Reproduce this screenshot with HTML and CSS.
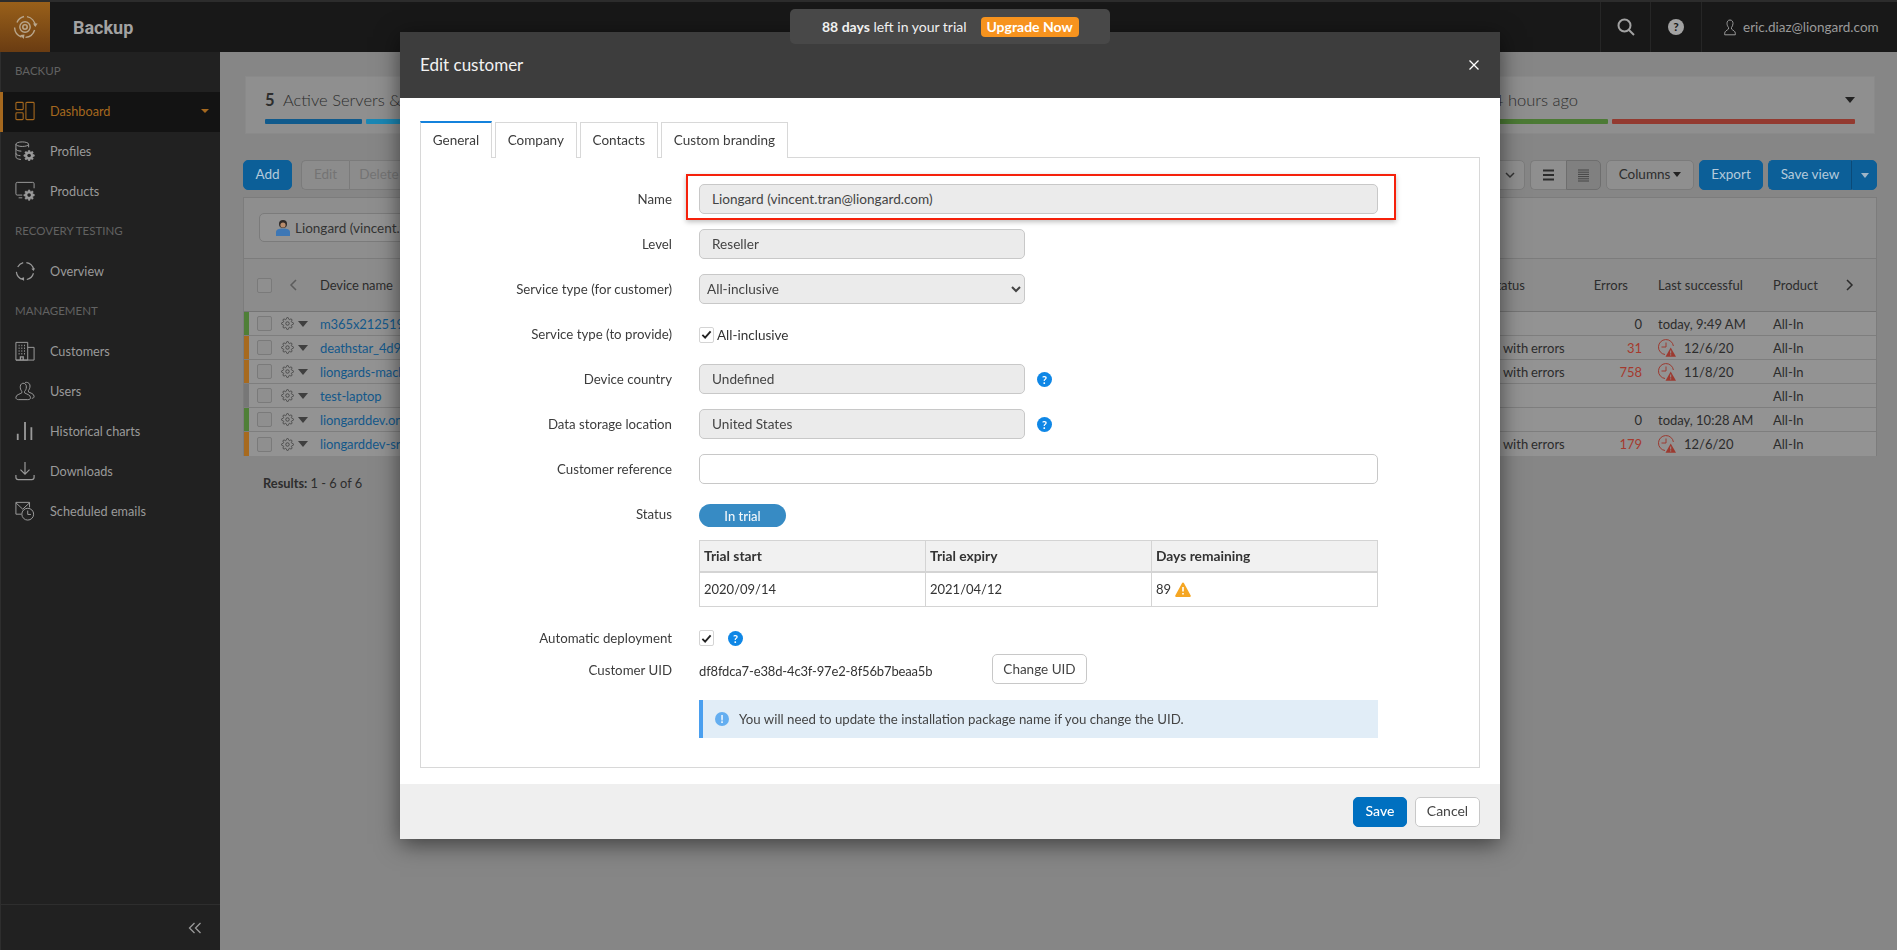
FILE: index.html
```html
<!DOCTYPE html>
<html lang="en">
<head>
<meta charset="utf-8">
<title>Backup - Edit customer</title>
<link rel="stylesheet" href="styles.css">
</head>
<body>
<svg class="defs" width="0" height="0" aria-hidden="true">
  <symbol id="gear" viewBox="0 0 24 24"><circle cx="12" cy="12" r="3.2"/><path d="M19.4 15a1.65 1.65 0 0 0 .33 1.82l.06.06a2 2 0 0 1 0 2.83 2 2 0 0 1-2.83 0l-.06-.06a1.65 1.65 0 0 0-1.82-.33 1.65 1.65 0 0 0-1 1.51V21a2 2 0 0 1-2 2 2 2 0 0 1-2-2v-.09A1.65 1.65 0 0 0 9 19.4a1.65 1.65 0 0 0-1.82.33l-.06.06a2 2 0 0 1-2.83 0 2 2 0 0 1 0-2.83l.06-.06a1.65 1.65 0 0 0 .33-1.82 1.65 1.65 0 0 0-1.51-1H3a2 2 0 0 1-2-2 2 2 0 0 1 2-2h.09A1.65 1.65 0 0 0 4.6 9a1.65 1.65 0 0 0-.33-1.82l-.06-.06a2 2 0 0 1 0-2.83 2 2 0 0 1 2.83 0l.06.06a1.65 1.65 0 0 0 1.82.33H9a1.65 1.65 0 0 0 1-1.51V3a2 2 0 0 1 2-2 2 2 0 0 1 2 2v.09a1.65 1.65 0 0 0 1 1.51 1.65 1.65 0 0 0 1.82-.33l.06-.06a2 2 0 0 1 2.83 0 2 2 0 0 1 0 2.83l-.06.06a1.65 1.65 0 0 0-.33 1.82V9a1.65 1.65 0 0 0 1.51 1H21a2 2 0 0 1 2 2 2 2 0 0 1-2 2h-.09a1.65 1.65 0 0 0-1.51 1z"/></symbol>
  <symbol id="late" viewBox="0 0 18 18"><path d="M15.400 7A7.500 7.500 0 1 0 7 15.500" fill="none" stroke="currentColor" stroke-width="1"/><path d="M8 3.500V8H3.500" fill="none" stroke="currentColor" stroke-width="1"/><path d="M12.700 8.500L18 17.800H7.500z" fill="currentColor"/><path d="M12.700 11.500v3M12.700 15.300v1.200" stroke="#939393" stroke-width="1"/></symbol>
  <symbol id="tick" viewBox="0 0 12 12"><path d="M1.500 6.500L4.500 9.500L10.500 2.500" fill="none" stroke="currentColor" stroke-width="2"/></symbol>
</svg>

<header class="topbar">
  <div class="logo">
    <svg width="26" height="26" viewBox="0 0 26 26" fill="none" stroke="#b9a68c" stroke-width="1.4"><circle cx="13" cy="13" r="5.2"/><circle cx="13" cy="13" r="2.2" stroke-width="1.6"/><path d="M5 8.5A10 10 0 0 1 12 2.5"/><path d="M15 2.6A10.5 10.5 0 0 1 23.3 12"/><path d="M22.6 16A10.5 10.5 0 0 1 13.5 23.4"/><path d="M9.5 23A10.5 10.5 0 0 1 2.6 13.5"/><path d="M21 9.5L23.4 13L25.6 9.5z" fill="#b9a68c" stroke="none"/><path d="M8 21L12.5 20.5L11.8 25z" fill="#b9a68c" stroke="none"/></svg>
  </div>
  <div class="app-name">Backup</div>
  <div class="top-cell top-cell-search">
    <svg width="18" height="18" viewBox="0 0 18 18" fill="none" stroke="#a2a2a2" stroke-width="2"><circle cx="7.5" cy="7.5" r="6"/><path d="M12 12l5 5"/></svg>
  </div>
  <div class="top-cell">
    <span class="top-help">?</span>
  </div>
  <div class="top-cell top-cell-user">
    <svg width="12" height="17" viewBox="0 0 12 17" fill="none" stroke="#9a9a9a" stroke-width="1"><path d="M6 1C3.8 1 3 2.800 3 4.500C3 6.300 3.800 7.500 4.500 8.500V10C3 11.500 .7 12 .7 14.200V15.800H11.300V14.200C11.300 12 9 11.500 7.500 10V8.500C8.200 7.500 9 6.300 9 4.500C9 2.800 8.200 1 6 1Z"/></svg>
    <span class="top-email">eric.diaz@liongard.com</span>
  </div>
</header>

<div class="shell">
  <nav class="sidebar">
    <div class="nav-section">Backup</div>
    <a class="nav-item nav-active">
      <svg class="nav-icon" viewBox="0 0 22 22" fill="none" stroke="#a5681e" stroke-width="1.2"><rect x="1" y="1.500" width="8" height="8" rx="1"/><rect x="1" y="13" width="8" height="7.500" rx="1"/><rect x="12" y="1.500" width="9" height="19" rx="1"/></svg>
      <span>Dashboard</span><i class="nav-caret"></i>
    </a>
    <a class="nav-item">
      <svg class="nav-icon" viewBox="0 0 22 22" fill="none" stroke="#9a9a9a" stroke-width="1.1"><ellipse cx="8" cy="3.500" rx="7" ry="2.500"/><path d="M15 4v3M1 3.500V17.500C1 19 3 20 6.500 20.300M1 8.500C1 10 3 11 7 11.200M1 13.500C1 15 3 16 6 16.200"/><use href="#gear" x="9" y="9.500" width="13" height="13" fill="#9a9a9a" stroke="#9a9a9a"/><circle cx="15.500" cy="16" r="2" fill="#212121" stroke="none"/></svg>
      <span>Profiles</span>
    </a>
    <a class="nav-item">
      <svg class="nav-icon" viewBox="0 0 22 22" fill="none" stroke="#9a9a9a" stroke-width="1.1"><path d="M8 15.500H2.500C1.500 15.500 1 15 1 14V3C1 2 1.500 1.500 2.500 1.500H19.500C20.500 1.500 21 2 21 3V8"/><path d="M4 18.500H8"/><use href="#gear" x="9" y="9" width="13" height="13" fill="#9a9a9a" stroke="#9a9a9a"/><circle cx="15.500" cy="15.500" r="2" fill="#212121" stroke="none"/></svg>
      <span>Products</span>
    </a>
    <div class="nav-section">Recovery testing</div>
    <a class="nav-item">
      <svg class="nav-icon" viewBox="0 0 22 22" fill="none" stroke="#9a9a9a" stroke-width="1.300"><path d="M3 6.500A9.500 9.500 0 0 1 9 1.800"/><path d="M12.500 1.700A9.500 9.500 0 0 1 20.500 9.500"/><path d="M20.300 13.500A9.500 9.500 0 0 1 13 20.300"/><path d="M9 20.400A9.500 9.500 0 0 1 1.500 12"/><path d="M18 8.500L20.500 11L22 8z" fill="#9a9a9a" stroke="none"/><path d="M6.500 19L10 18V22z" fill="#9a9a9a" stroke="none"/></svg>
      <span>Overview</span>
    </a>
    <div class="nav-section">Management</div>
    <a class="nav-item">
      <svg class="nav-icon" viewBox="0 0 22 22" fill="none" stroke="#9a9a9a" stroke-width="1.100"><path d="M1 21V1.500H14V21zM14 7H21V21H1"/><path d="M4 5h1M7 5h1M10 5h1M4 8h1M7 8h1M10 8h1M4 11h1M7 11h1M10 11h1M4 14h1M7 14h1M10 14h1M6 21v-3.500h3V21" stroke-width="1.500"/></svg>
      <span>Customers</span>
    </a>
    <a class="nav-item">
      <svg class="nav-icon" viewBox="0 0 22 22" fill="none" stroke="#9a9a9a" stroke-width="1.100"><path d="M8.500 2.500C6.500 3 5.500 5 5.800 7.500C6 9.500 7 10.500 7.500 11.500V13C5.500 14.500 1 15 1 18C1 20 2.500 20.500 4 20.500H14C16 20.500 17 20 17 18C17 15 12.500 14.500 10.500 13V11.500C11.500 10.500 12.500 9 12.500 6.500C12.500 4 11 2 8.500 2.500Z"/><path d="M11 1.800C13 .8 16.500 2 16.500 5.500C16.500 8 15.500 9.500 14.800 10.300V12C16.500 13 21 14 21 16.800C21 18.500 20 19 18.500 19"/></svg>
      <span>Users</span>
    </a>
    <a class="nav-item">
      <svg class="nav-icon" viewBox="0 0 22 22" fill="none" stroke="#9a9a9a" stroke-width="2"><path d="M3 21V14M11 21V1M18 21V7"/></svg>
      <span>Historical charts</span>
    </a>
    <a class="nav-item">
      <svg class="nav-icon" viewBox="0 0 22 22" fill="none" stroke="#9a9a9a" stroke-width="1.300"><path d="M11 1V14M6 9.500L11 14.500L16 9.500"/><path d="M1 15.500V18C1 19.500 2 20.500 3.500 20.500H18.500C20 20.500 21 19.500 21 18V15.500"/></svg>
      <span>Downloads</span>
    </a>
    <a class="nav-item">
      <svg class="nav-icon" viewBox="0 0 22 22" fill="none" stroke="#9a9a9a" stroke-width="1.100"><path d="M7 14.500H1V1.500H16V7M1 2L8.500 9L16 2"/><circle cx="14" cy="14.500" r="6.500"/><path d="M14 10.500V14.800H17.500"/></svg>
      <span>Scheduled emails</span>
    </a>
    <div class="side-foot">
      <svg width="14" height="12" viewBox="0 0 14 12" fill="none" stroke="#9a9a9a" stroke-width="1.300"><path d="M6.500 1L1.500 6L6.500 11M12.500 1L7.500 6L12.500 11"/></svg>
    </div>
  </nav>

  <main class="main">
    <section class="summary">
      <div class="summary-head">
        <span><b>5</b>&nbsp; Active Servers &amp; Workstations</span>
        <span class="summary-right">Last backup 4 hours ago</span>
        <i class="caret caret-dark"></i>
      </div>
      <div class="summary-bars">
        <i class="bar bar-blue"></i><i class="bar bar-cyan"></i><i class="bar bar-green"></i><i class="bar bar-red"></i>
      </div>
    </section>

    <div class="toolbar">
      <button class="btn btn-blue btn-add">Add</button>
      <div class="btn-group">
        <button class="btn btn-off">Edit</button><button class="btn btn-off">Delete</button>
      </div>
      <div class="toolbar-right">
        <button class="btn btn-grey btn-chevron"><svg width="10" height="7" viewBox="0 0 10 7" fill="none" stroke="#333" stroke-width="1.500"><path d="M1 1l4 4 4-4"/></svg></button>
        <div class="btn-group">
          <button class="btn btn-grey btn-density"><svg width="11" height="12" viewBox="0 0 11 12" stroke="#2c2c2c" stroke-width="2"><path d="M0 1.500h11M0 6h11M0 10.500h11"/></svg></button><button class="btn btn-pressed btn-density"><svg width="11" height="13" viewBox="0 0 11 13" stroke="#444" stroke-width="1"><path d="M0 1h11M0 3.200h11M0 5.400h11M0 7.600h11M0 9.800h11M0 12h11"/></svg></button>
        </div>
        <button class="btn btn-grey btn-columns">Columns <i class="caret caret-dark caret-small"></i></button>
        <button class="btn btn-blue btn-export">Export</button>
        <div class="btn-group">
          <button class="btn btn-blue btn-save">Save view</button><button class="btn btn-blue btn-split"><i class="caret caret-light caret-small"></i></button>
        </div>
      </div>
    </div>

    <section class="grid-panel">
      <div class="filter-row">
        <div class="chip">
          <svg width="14" height="17" viewBox="0 0 14 17"><circle cx="7" cy="5" r="4" fill="#2e2a28"/><path d="M0 17V13C0 10.500 3 9.500 7 9.500S14 10.500 14 13V17z" fill="#3d77b5"/><circle cx="7" cy="6" r="2.600" fill="#b98d6d"/></svg>
          <span>Liongard (vincent.tran@liongard.com)</span>
        </div>
      </div>
      <div class="g-row g-head">
        <span class="c-flag"></span>
        <span class="c-check"><i class="box"></i></span>
        <span class="c-tools"><svg width="9" height="14" viewBox="0 0 9 14" fill="none" stroke="#5c5c5c" stroke-width="1.500"><path d="M7 2L2 7l5 5"/></svg></span>
        <span class="c-name">Device name</span>
        <span class="c-status">Last status</span>
        <span class="c-errors">Errors</span>
        <span class="c-last">Last successful</span>
        <span class="c-product">Product</span>
        <span class="c-more"><svg width="9" height="14" viewBox="0 0 9 14" fill="none" stroke="#2c2c2c" stroke-width="1.500"><path d="M2 2l5 5-5 5"/></svg></span>
      </div>
      <div class="g-row">
        <span class="c-flag flag-green"></span><span class="c-check"><i class="box"></i></span>
        <span class="c-tools"><svg class="gear"><use href="#gear"/></svg><i class="caret caret-dim"></i></span>
        <a class="c-name">m365x212519.onmicrosoft.com</a><span class="c-status">Successful</span><span class="c-errors">0</span>
        <span class="c-last">today, 9:49 AM</span><span class="c-product">All-In</span>
      </div>
      <div class="g-row">
        <span class="c-flag flag-orange"></span><span class="c-check"><i class="box"></i></span>
        <span class="c-tools"><svg class="gear"><use href="#gear"/></svg><i class="caret caret-dim"></i></span>
        <a class="c-name">deathstar_4d9a2c</a><span class="c-status">Successful with errors</span><span class="c-errors err">31</span>
        <span class="c-last"><svg class="late"><use href="#late"/></svg>12/6/20</span><span class="c-product">All-In</span>
      </div>
      <div class="g-row">
        <span class="c-flag flag-orange"></span><span class="c-check"><i class="box"></i></span>
        <span class="c-tools"><svg class="gear"><use href="#gear"/></svg><i class="caret caret-dim"></i></span>
        <a class="c-name">liongards-macbook-pro</a><span class="c-status">Successful with errors</span><span class="c-errors err">758</span>
        <span class="c-last"><svg class="late"><use href="#late"/></svg>11/8/20</span><span class="c-product">All-In</span>
      </div>
      <div class="g-row">
        <span class="c-flag flag-grey"></span><span class="c-check"><i class="box"></i></span>
        <span class="c-tools"><svg class="gear"><use href="#gear"/></svg><i class="caret caret-dim"></i></span>
        <a class="c-name">test-laptop</a><span class="c-status"></span><span class="c-errors"></span>
        <span class="c-last"></span><span class="c-product">All-In</span>
      </div>
      <div class="g-row">
        <span class="c-flag flag-green"></span><span class="c-check"><i class="box"></i></span>
        <span class="c-tools"><svg class="gear"><use href="#gear"/></svg><i class="caret caret-dim"></i></span>
        <a class="c-name">liongarddev.onmicrosoft.com</a><span class="c-status">Successful</span><span class="c-errors">0</span>
        <span class="c-last">today, 10:28 AM</span><span class="c-product">All-In</span>
      </div>
      <div class="g-row">
        <span class="c-flag flag-orange"></span><span class="c-check"><i class="box"></i></span>
        <span class="c-tools"><svg class="gear"><use href="#gear"/></svg><i class="caret caret-dim"></i></span>
        <a class="c-name">liongarddev-srv01</a><span class="c-status">Successful with errors</span><span class="c-errors err">179</span>
        <span class="c-last"><svg class="late"><use href="#late"/></svg>12/6/20</span><span class="c-product">All-In</span>
      </div>
    </section>
    <p class="results"><b>Results:</b> 1 - 6 of 6</p>
  </main>
</div>

<div class="trial">
  <span><b>88 days</b> left in your trial</span>
  <a class="upgrade">Upgrade Now</a>
</div>

<div class="modal" role="dialog">
  <div class="modal-head">
    <h1>Edit customer</h1>
    <svg width="12" height="12" viewBox="0 0 12 12" stroke="#fff" stroke-width="1.300"><path d="M1.500 1.500l9 9M10.500 1.500l-9 9"/></svg>
  </div>
  <div class="modal-body">
    <div class="tabs">
      <a class="tab tab-on">General</a><a class="tab">Company</a><a class="tab">Contacts</a><a class="tab">Custom branding</a>
    </div>
    <div class="panel">
      <div class="form">
        <label>Name</label>
        <div class="name-wrap"><div class="field field-ro">Liongard (vincent.tran@liongard.com)</div><div class="marker"></div></div>

        <label>Level</label>
        <div class="field field-ro field-half">Reseller</div>

        <label>Service type (for customer)</label>
        <select class="field field-half field-select"><option>All-inclusive</option></select>

        <label>Service type (to provide)</label>
        <div class="check-line"><i class="check"><svg width="11" height="11"><use href="#tick"/></svg></i><span>All-inclusive</span></div>

        <label>Device country</label>
        <div class="with-help"><div class="field field-ro field-half">Undefined</div><i class="help">?</i></div>

        <label>Data storage location</label>
        <div class="with-help"><div class="field field-ro field-half">United States</div><i class="help">?</i></div>

        <label>Customer reference</label>
        <input class="field field-input" type="text">

        <label>Status</label>
        <div class="status-cell">
          <span class="pill">In trial</span>
          <table class="trial-table">
            <tr><th>Trial start</th><th>Trial expiry</th><th>Days remaining</th></tr>
            <tr><td>2020/09/14</td><td>2021/04/12</td><td>89 <svg class="warn" width="16" height="15" viewBox="0 0 16 15"><path d="M8 .5a1 1 0 0 1 .9.5l6.800 12.400a1 1 0 0 1-.9 1.500H1.200a1 1 0 0 1-.9-1.500L7.100 1a1 1 0 0 1 .9-.5z" fill="#f5a623"/><path d="M8 5v4.500M8 11v1.500" stroke="#fff" stroke-width="1.600"/></svg></td></tr>
          </table>
        </div>

        <label class="label-auto">Automatic deployment</label>
        <div class="auto-line"><i class="check"><svg width="11" height="11"><use href="#tick"/></svg></i><i class="help">?</i></div>

        <label class="label-uid">Customer UID</label>
        <div class="uid-line"><span class="uid">df8fdca7-e38d-4c3f-97e2-8f56b7beaa5b</span><button class="btn-plain">Change UID</button></div>

        <span></span>
        <div class="notice"><i class="notice-icon">!</i><span>You will need to update the installation package name if you change the UID.</span></div>
      </div>
    </div>
  </div>
  <div class="modal-foot">
    <button class="foot-btn foot-save">Save</button>
    <button class="foot-btn foot-cancel">Cancel</button>
  </div>
</div>
</body>
</html>
```
FILE: styles.css
```css
* { box-sizing: border-box; }
html, body { margin: 0; height: 950px; overflow: hidden; }
body { font-family: "Lato", "Liberation Sans", sans-serif; font-size: 13.5px; color: #333; background: #868686; }
.defs { position: absolute; }
button { font: inherit; }

/* top bar */
.topbar { display: flex; height: 52px; background: #181818; border-top: 2px solid #2c2c2c; }
.logo { width: 50px; display: flex; align-items: center; justify-content: center; background: linear-gradient(#99601a, #6a3c12); }
.app-name { flex: 1; padding-left: 23px; line-height: 52px; font-family: "Roboto", sans-serif; font-size: 18px; font-weight: 700; color: #a2a2a2; }
.top-cell { width: 51px; display: flex; align-items: center; justify-content: center; border-left: 1px solid #262626; }
.top-cell-search { width: 50px; }
.top-cell-user { width: 196px; justify-content: flex-start; padding-left: 22px; gap: 7px; }
.top-help { width: 16px; height: 16px; border-radius: 50%; background: #a2a2a2; color: #181818; font-size: 12px; font-weight: 700; line-height: 16px; text-align: center; }
.top-email { color: #9a9a9a; font-size: 13.5px; }

/* shell */
.shell { display: flex; height: 898px; }
.sidebar { width: 220px; display: flex; flex-direction: column; background: #212121; border-left: 1px solid #2e2e2e; color: #9a9a9a; }
.nav-section { height: 40px; padding: 0 0 3px 14px; display: flex; align-items: center; font-size: 11.5px; text-transform: uppercase; color: #626262; }
.nav-item { height: 40px; display: flex; align-items: center; padding: 0 0 2px 14px; gap: 15px; font-size: 12.7px; }
.nav-icon { width: 20px; height: 20px; flex: none; }
.nav-active { background: #131313; color: #a5681e; border-left: 3px solid #a5681e; margin-left: -1px; padding-left: 12px; }
.nav-caret { margin-left: auto; margin-right: 11px; border: 4px solid transparent; border-top: 4px solid #a5681e; border-bottom: 0; width: 0; height: 0; border-left-width: 4px; }
.side-foot { margin-top: auto; height: 46px; border-top: 1px solid #2e2e2e; display: flex; align-items: center; justify-content: flex-end; padding-right: 18px; }

/* main */
.main { flex: 1; min-width: 0; padding: 24px 20px 0 23px; }
.summary { margin: 0 2px; height: 58px; background: #8f8f8f; border: 1px solid #8a8a8a; padding: 11px 19px 0 19px; }
.summary-head { display: flex; align-items: center; font-size: 16.5px; font-weight: 300; color: #2d2d2d; height: 24px; }
.summary-head b { font-weight: 700; }
.summary-right { margin-left: auto; margin-right: 267px; }
.summary-bars { display: flex; gap: 4px; margin-top: 7px; }
.bar { height: 5px; border-radius: 1px; display: block; }
.bar-blue { width: 97px; background: #105a8c; }
.bar-cyan { width: 300px; background: #1b87b4; }
.bar-green { flex: 1; background: #4c7a35; }
.bar-red { width: 243px; background: #933a30; }

.caret { display: inline-block; width: 0; height: 0; border-left: 5px solid transparent; border-right: 5px solid transparent; border-top: 6px solid #222; }
.caret-small { border-left-width: 4px; border-right-width: 4px; border-top-width: 5px; }
.caret-light { border-top-color: #9fb5c7; }
.caret-dim { border-top-color: #3f3f3f; }

.toolbar { display: flex; gap: 9px; margin-top: 26px; height: 30px; }
.toolbar-right { margin-left: auto; display: flex; gap: 5px; }
.btn { height: 30px; padding: 0 0 2px; border-radius: 5px; border: 1px solid #7b7b7b; font-size: 13.5px; display: inline-flex; align-items: center; justify-content: center; gap: 3px; }
.btn-blue { background: #0c5f98; border-color: #0c5f98; color: #b4cadb; }
.btn-add { width: 49px; }
.btn-grey { background: #8f8f8f; color: #2d2d2d; }
.btn-off { background: #8c8c8c; color: #747474; }
.btn-pressed { background: #808080; border-color: #6e6e6e; }
.btn-group { display: flex; }
.btn-group .btn:first-child { border-radius: 5px 0 0 5px; border-right: 0; }
.btn-group .btn:last-child { border-radius: 0 5px 5px 0; }
.btn-off:first-child { width: 48px; }
.btn-off:last-child { width: 60px; }
.btn-density { width: 35.5px; padding: 0; }
.btn-chevron { width: 30px; padding: 0; }
.btn-columns { width: 88px; }
.btn-export { width: 64px; }
.btn-save { width: 84px; border-right: 1px solid #0b4a78 !important; }
.btn-split { width: 25px; padding: 0; }

.grid-panel { margin-top: 7px; background: #8e8e8e; border: 1px solid #7c7c7c; border-bottom: 0; width: 1634px; }
.filter-row { height: 61px; padding: 15px 0 0 15px; border-bottom: 1px solid #7c7c7c; }
.chip { display: inline-flex; align-items: center; gap: 5px; height: 29px; padding: 0 18px 0 16px; border: 1px solid #7b7b7b; border-radius: 5px; background: #939393; font-size: 13.5px; }
.g-row { display: grid; grid-template-columns: 5px 29px 38px 1123px 141px 62px 131px 72px 1fr; align-items: center; height: 24px; background: #939393; border-bottom: 1px solid #7e7e7e; color: #2c2c2c; font-size: 13px; }
.g-row:last-child { border-bottom: 0; }
.g-head { height: 53px; background: #8c8c8c; border-bottom: 1px solid #757575; }
.c-flag { height: 100%; display: block; }
.flag-green { background: #4f7f37; }
.flag-orange { background: #a76a1f; }
.flag-grey { background: #777; }
.c-check { padding-left: 8px; display: flex; }
.box { width: 15px; height: 15px; display: block; border: 1px solid #7a7a7a; border-radius: 2px; background: #8f8f8f; }
.c-tools { display: flex; align-items: center; gap: 4px; padding-left: 3px; }
.g-head .c-tools { padding-left: 11px; }
.gear { width: 13px; height: 13px; fill: none; stroke: #3f3f3f; stroke-width: 1.500; }
.c-name { padding-left: 4px; color: #14588a; white-space: nowrap; overflow: hidden; letter-spacing: -.1px; }
.g-head .c-name, .g-head .c-status, .g-head .c-errors, .g-head .c-last, .g-head .c-product { color: #2c2c2c; }
.c-status { white-space: nowrap; padding-left: 2px; word-spacing: -.5px; }
.g-head .c-status { padding-left: 25px; word-spacing: 0; }
.c-errors { text-align: right; }
.g-head .c-errors { padding-right: 14px; }
.err { color: #a53a2e; }
.c-last { padding-left: 16px; display: flex; align-items: center; gap: 8px; white-space: nowrap; }
.late { width: 18px; height: 18px; color: #9c3a30; }
.c-more { display: flex; }
.results { margin: 19px 0 0 20px; font-size: 12.8px; color: #2d2d2d; }

/* trial banner */
.trial { position: fixed; z-index: 3; left: 790px; top: 9px; width: 320px; height: 35px; display: flex; align-items: center; gap: 14px; padding-left: 32px; background: #484848; border-radius: 5px; color: #f0f0f0; font-size: 14px; }
.upgrade { width: 98px; height: 20px; display: flex; align-items: center; justify-content: center; background: #f7931e; border-radius: 4px; color: #fff; font-weight: 700; font-size: 14px; }

/* modal */
.modal { position: fixed; z-index: 2; left: 400px; top: 32px; width: 1100px; background: #fff; box-shadow: 0 5px 22px rgba(0,0,0,.55); }
.modal-head { height: 66px; display: flex; align-items: center; justify-content: space-between; padding: 0 20px; background: #3d3d3d; }
.modal-head h1 { margin: 0 0 2px; font-size: 17px; font-weight: 400; color: #f2f2f2; }
.modal-body { padding: 23px 20px 16px; }
.tabs { display: flex; gap: 3px; height: 37px; position: relative; z-index: 1; }
.tab { height: 36px; margin-top: 1px; padding: 0 11.8px 2px; display: flex; align-items: center; background: #fff; border: 1px solid #d8d8d8; border-bottom: 0; color: #3c3c3c; font-size: 13.5px; }
.tab-on { height: 37px; margin-top: 0; border-top: 2px solid #1482dc; }
.panel { margin-top: -1px; height: 611px; border: 1px solid #d8d8d8; padding-top: 26px; }
.form { display: grid; grid-template-columns: 251px 679px; column-gap: 27px; row-gap: 15px; }
.form label { height: 30px; display: flex; align-items: center; justify-content: flex-end; color: #3c3c3c; font-size: 13.25px; }
.field { height: 30px; display: flex; align-items: center; padding: 0 12px; border: 1px solid #c8c8c8; border-radius: 5px; font-family: inherit; font-size: 13.6px; color: #444; background: #fff; }
.field-ro { background: #ebebeb; }
.field-half { width: 326px; }
.field-select { background: #ebebeb; padding: 0 3px; color: #444; }
.field-input { width: 100%; }
.name-wrap { position: relative; }
.marker { position: absolute; left: -13px; right: -18px; top: -10px; bottom: -6px; border: 2px solid #f5210b; box-shadow: 0 2px 5px rgba(0,0,0,.25); }
.check-line { height: 31px; display: flex; align-items: center; gap: 3px; margin-bottom: -1px; }
.check { width: 15px; height: 16px; display: flex; align-items: center; justify-content: center; border: 1px solid #d4d4d4; border-radius: 2px; color: #222; background: #fff; font-style: normal; }
.with-help { display: flex; align-items: center; gap: 12px; }
.help { width: 15px; height: 15px; border-radius: 50%; background: #0f87e6; color: #fff; font-size: 11px; font-weight: 700; font-style: normal; line-height: 15px; text-align: center; }
.status-cell { display: flex; flex-direction: column; padding-top: 5px; }
.pill { width: 87px; height: 23px; display: flex; align-items: center; justify-content: center; border-radius: 12px; background: #378bc4; color: #f2f7fb; font-size: 13px; font-weight: 500; }
.trial-table { margin-top: 13px; width: 679px; height: 67px; border-collapse: collapse; table-layout: fixed; font-size: 13px; color: #333; }
.trial-table th { height: 31px; text-align: left; padding: 0 4px; background: #f1f1f1; border: 1px solid #d4d4d4; border-bottom-width: 2px; font-size: 13.8px; font-weight: 700; }
.trial-table td { padding: 0 4px; border: 1px solid #d4d4d4; }
.warn { vertical-align: -3px; margin-left: 1px; }
.label-auto { margin-top: 1px; }
.auto-line { display: flex; align-items: center; gap: 14px; height: 30px; margin-top: 1px; }
.label-uid, .uid-line { margin-top: -14px; }
.label-uid { padding-top: 2px; }
.uid-line { display: flex; align-items: center; height: 30px; margin-bottom: 1px; }
.uid { width: 293px; padding-top: 3px; font-size: 13px; color: #333; letter-spacing: -.15px; }
.btn-plain { width: 95px; height: 30px; padding: 0; border: 1px solid #c8c8c8; border-radius: 5px; background: #fff; color: #444; font-size: 13.5px; }
.notice { height: 38px; display: flex; align-items: center; gap: 10px; padding-left: 12px; background: #e1edf7; border-left: 4px solid #4a9fef; color: #444; font-size: 13.25px; }
.notice-icon { width: 14px; height: 14px; border-radius: 50%; background: #64aef0; color: #fff; font-size: 11px; font-weight: 700; font-style: normal; text-align: center; line-height: 14px; }
.modal-foot { height: 55px; display: flex; justify-content: flex-end; align-items: center; gap: 8px; padding-right: 20px; background: #efefef; }
.foot-btn { height: 30px; padding: 0 0 2px; border-radius: 5px; font-size: 14px; }
.foot-save { width: 54px; border: 1px solid #0070c0; background: #0070c0; color: #fff; font-weight: 500; }
.foot-cancel { width: 65px; border: 1px solid #c8c8c8; background: #fff; color: #444; }
```
